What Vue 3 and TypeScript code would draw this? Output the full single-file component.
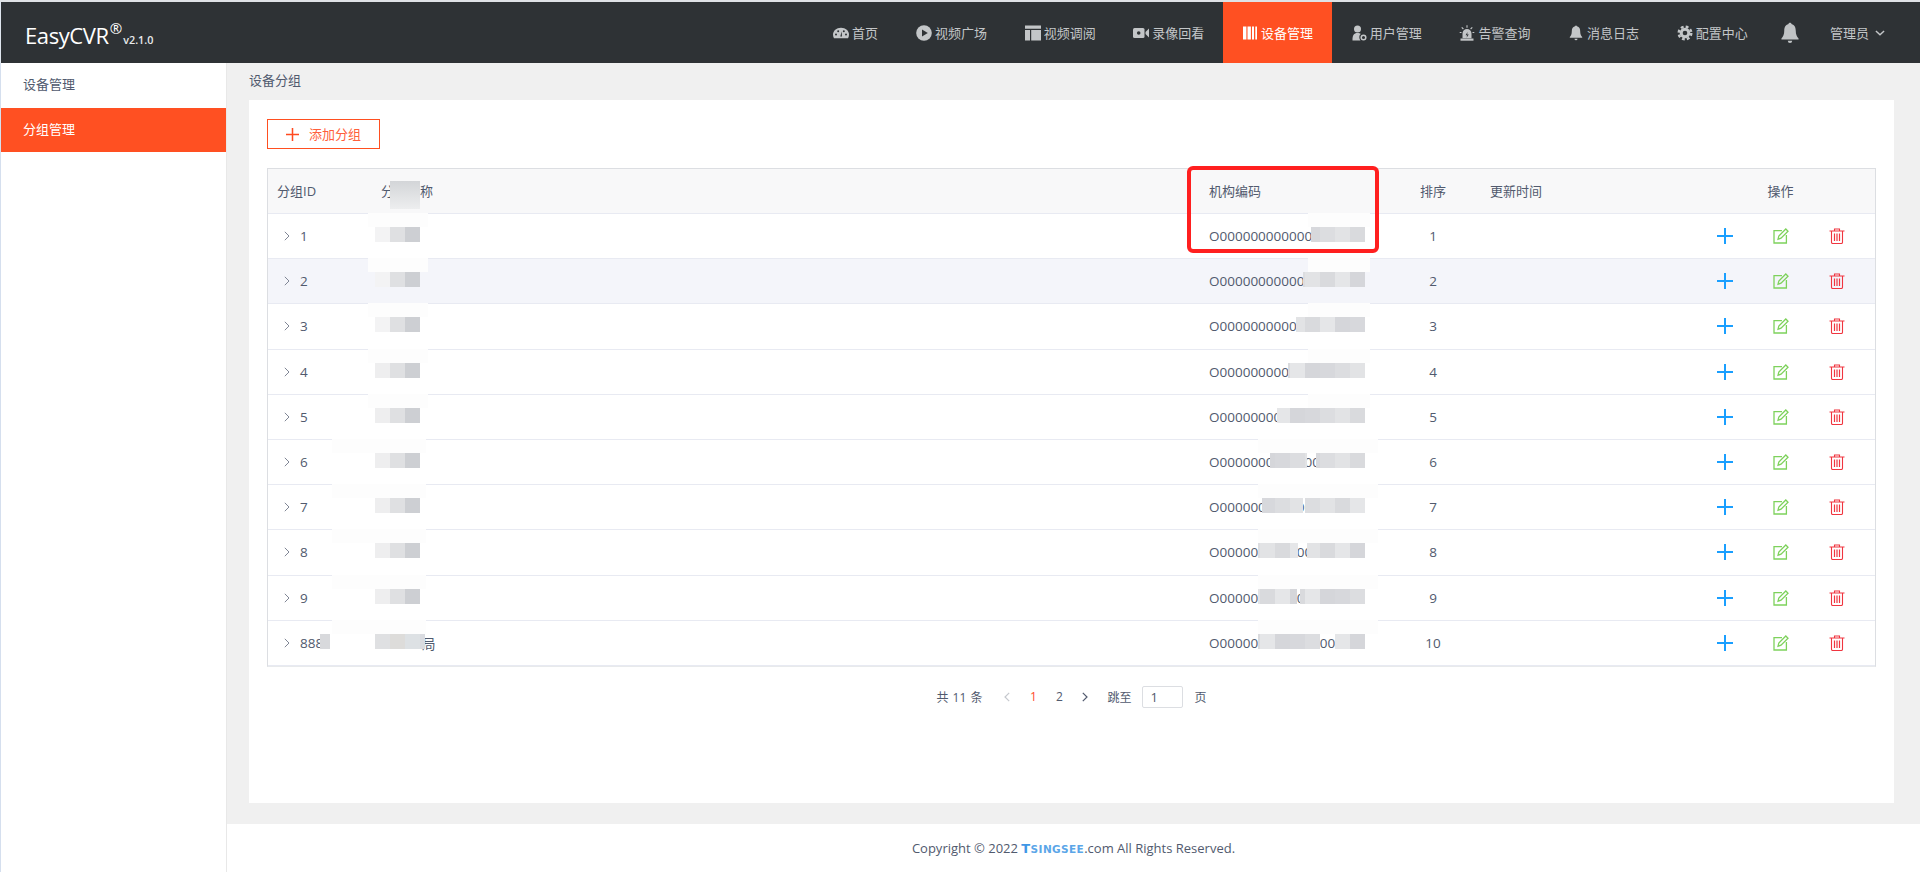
<script setup lang="ts">
interface NavItem { label: string; icon: string; active?: boolean; short?: boolean }
const dark = '#2e3235'
const navItems: NavItem[] = [
  { label: '首页', short: true, icon: `<path d="M1 13.2C.3 12 0 11 0 9.800 0 5.800 3.400 2.800 8 2.800s8 3 8 7c0 1.200-.3 2.200-1 3.400z" fill="currentColor"/><circle cx="3" cy="9.500" r="1" fill="${dark}"/><circle cx="5.200" cy="6.300" r="1" fill="${dark}"/><circle cx="13" cy="9.500" r="1" fill="${dark}"/><circle cx="10.800" cy="6.300" r="1" fill="${dark}"/><path d="M7.300 11.500 8.600 6.200 9 11.500z" fill="${dark}"/>` },
  { label: '视频广场', icon: `<circle cx="8" cy="8" r="7.800" fill="currentColor"/><path d="M6 4.400 11.800 8 6 11.600z" fill="${dark}"/>` },
  { label: '视频调阅', icon: `<path d="M0 .5h16v3.200H0zM0 5h5v10.500H0zM6.200 5H16v10.500H6.200z" fill="currentColor"/>` },
  { label: '录像回看', icon: `<rect x="0" y="3" width="11.500" height="10" rx="1.500" fill="currentColor"/><circle cx="5.700" cy="8" r="1.800" fill="${dark}"/><path d="M12.500 7 16 3.500v9L12.500 9z" fill="currentColor"/>` },
  { label: '设备管理', active: true, icon: `<path d="M1 1.500h3.400v13H1zM5.500 1.500h3.400v13H5.500zM10 1.500h2v13h-2zM13.300 1.500h1.700v13h-1.700z" fill="currentColor"/>` },
  { label: '用户管理', icon: `<circle cx="6.500" cy="4" r="3.500" fill="currentColor"/><path d="M1.500 15.500c0-5.500 1.300-7.500 5-7.500 1.500 0 2.500.3 3.300 1-1.500 1-2.200 4-.3 6.500z" fill="currentColor"/><circle cx="12.500" cy="12.500" r="2.300" fill="none" stroke="currentColor" stroke-width="1.500"/>` },
  { label: '告警查询', icon: `<path d="M3.500 13.200V8.500a4.500 4.500 0 0 1 9 0v4.700z" fill="currentColor"/><path d="M1.500 13.500h13v2.200h-13z" fill="currentColor"/><path d="M8.500 7 6.600 10.300h1.600L7.500 12.800l2.300-3.400H8.200z" fill="${dark}"/><path d="M8 .3v2.500M2.700 2.300l1.700 1.700M13.300 2.300 11.600 4M.7 7.500h1.800M13.500 7.500h1.800" stroke="currentColor" stroke-width="1.100"/>` },
  { label: '消息日志', icon: `<path d="M7 1.200c.3-.8 1.700-.8 2 0 2.400.6 3.200 2.700 3.200 5 0 3 .8 4.500 2 5.800v.8H1.800V12c1.200-1.300 2-2.800 2-5.800 0-2.300.8-4.400 3.200-5z" fill="currentColor"/><path d="M6.500 13.800h3a1.500 1.500 0 0 1-3 0z" fill="currentColor"/>` },
  { label: '配置中心', icon: `<circle cx="8" cy="8" r="5.300" fill="currentColor"/><circle cx="8" cy="8" r="6.300" fill="none" stroke="currentColor" stroke-width="2.400" stroke-dasharray="2.800 2.140"/><circle cx="8" cy="8" r="2.300" fill="${dark}"/>` },
]

const tones = ['#d7d8dc', '#dcdde0', '#e2e3e5', '#d9dadd', '#e5e6e8', '#d5d6da']
interface Tile { x: number; w: number; color: string }
function split(a: number, b: number, seed: number): Tile[] {
  const out: Tile[] = []
  let x = a
  let i = seed
  while (x < b) {
    const next = Math.min(b, (Math.floor((x - 1305) / 15) + 1) * 15 + 1305)
    out.push({ x, w: next - x, color: tones[i % tones.length] })
    x = next
    i += 1
  }
  return out
}
const codeSegments: number[][][] = [
  [[1311, 1365]], [[1303, 1365]], [[1296, 1365]], [[1288, 1365]], [[1277, 1365]],
  [[1270, 1307], [1316, 1365]], [[1262, 1303], [1305, 1365]], [[1258, 1298], [1307, 1365]],
  [[1258, 1297], [1300, 1365]], [[1258, 1320], [1335, 1365]],
]
const rows = codeSegments.map((segs, i) => {
  const last = i === 9
  const nameTiles: Tile[] = last
    ? [
        { x: 320, w: 10, color: '#d8d9dc' },
        { x: 375, w: 15, color: '#dfe0e2' },
        { x: 390, w: 15, color: '#dddcda' },
        { x: 405, w: 15, color: '#dde1e4' },
        { x: 420, w: 5, color: '#d9dbe0' },
      ]
    : [
        { x: 375, w: 15, color: i < 3 ? '#f3f3f4' : '#eeeeef' },
        { x: 390, w: 15, color: '#dfe0e2' },
        { x: 405, w: 15, color: '#cdcfd3' },
      ]
  return {
    id: last ? '888' : String(i + 1),
    sort: i + 1,
    last,
    hover: i === 1,
    tiles: [...nameTiles, ...segs.flatMap((s, k) => split(s[0], s[1], i + k))],
    covers: [
      { x: i >= 5 ? 332 : 368, w: i >= 5 ? 94 : 60 },
      { x: i >= 5 ? 1258 : 1308, w: i >= 5 ? 120 : 62 },
    ],
  }
})
const code = 'O' + '0'.repeat(18)
const offset = 268
</script>

<template>
  <div class="page">
    <div class="strip"></div>
    <header class="topbar">
      <div class="logo">
        <span class="brand">EasyCVR</span><span class="reg">®</span><span class="ver">v2.1.0</span>
      </div>
      <nav class="nav">
        <a
          v-for="item in navItems"
          :key="item.label"
          class="nav-item"
          :class="{ active: item.active, short: item.short }"
        >
          <svg class="nav-icon" viewBox="0 0 16 16" v-html="item.icon"></svg>
          <span>{{ item.label }}</span>
        </a>
        <svg class="bell" viewBox="0 0 16 18">
          <path d="M6.800 1.600C7 .4 9 .4 9.200 1.600c2.700.7 3.500 3 3.500 5.400 0 3.300.9 5 2.300 6.400v1H1v-1C2.400 12 3.300 10.300 3.300 7c0-2.400.8-4.700 3.500-5.400z" fill="currentColor" />
          <path d="M6.200 15.400h3.600a1.800 1.800 0 0 1-3.600 0z" fill="currentColor" />
        </svg>
        <div class="user">
          <span>管理员</span>
          <svg class="caret" viewBox="0 0 8 5"><path d="M.6.800 4 4 7.400.800" fill="none" stroke="currentColor" stroke-width="1.200" /></svg>
        </div>
      </nav>
    </header>
    <div class="body">
      <aside class="side">
        <div class="side-item">设备管理</div>
        <div class="side-item on">分组管理</div>
      </aside>
      <main class="main">
        <div class="crumb">设备分组</div>
        <section class="card">
          <button class="add" type="button">
            <svg class="add-icon" viewBox="0 0 12 12"><path d="M6 0v12M0 6h12" stroke="currentColor" stroke-width="1.400" /></svg>
            <span>添加分组</span>
          </button>
          <div class="table">
            <div class="tr head">
              <div class="c-id head-id">分组ID</div>
              <div class="c-name">分组名称</div>
              <div class="c-code">机构编码</div>
              <div class="c-sort">排序</div>
              <div class="c-time">更新时间</div>
              <div class="c-op">操作</div>
              <span class="head-mask"></span>
            </div>
            <div v-for="row in rows" :key="row.sort" class="tr" :class="{ hover: row.hover }">
              <div class="c-id">
                <svg class="expand" viewBox="0 0 6 10"><path d="M.8.800 5 5 .8 9.200" fill="none" stroke="currentColor" stroke-width="1" /></svg>
                <span>{{ row.id }}</span>
              </div>
              <div class="c-name"><span v-if="row.last" class="tail">局</span></div>
              <div class="c-code">{{ code }}</div>
              <div class="c-sort">{{ row.sort }}</div>
              <div class="c-time"></div>
              <div class="c-op actions">
                <svg class="act plus" viewBox="0 0 16 16"><path d="M8 0v16M0 8h16" stroke="currentColor" stroke-width="2" /></svg>
                <svg class="act edit" viewBox="0 0 16 16">
                  <path d="M9 2.600H1v12.400h12.400V7" fill="none" stroke="currentColor" stroke-width="1.300" />
                  <path d="M5 11.300 5.800 8 12.800 1 15 3.200 8 10.200z" fill="none" stroke="currentColor" stroke-width="1.300" />
                </svg>
                <svg class="act trash" viewBox="0 0 16 16">
                  <path d="M.5 3h15M5.500 3V1h5v2M2.500 3v11.200c0 .8.500 1.300 1.300 1.300h8.400c.8 0 1.300-.5 1.300-1.300V3" fill="none" stroke="currentColor" stroke-width="1.100" />
                  <path d="M5.500 5.500v7.500M8 5.500v7.500M10.500 5.500v7.500" stroke="currentColor" stroke-width="1.200" />
                </svg>
              </div>
              <span
                v-for="c in row.covers"
                :key="'c' + c.x"
                class="cover"
                :style="{ left: c.x - offset + 'px', width: c.w + 'px' }"
              ></span>
              <span
                v-for="t in row.tiles"
                :key="t.x"
                class="tile"
                :style="{ left: t.x - offset + 'px', width: t.w + 'px', background: t.color }"
              ></span>
            </div>
            <div class="mark"></div>
          </div>
          <div class="pager">
            <span class="total">共 11 条</span>
            <svg class="pg-arrow off" viewBox="0 0 6 10"><path d="M5.200.800 1 5l4.200 4.200" fill="none" stroke="currentColor" stroke-width="1.200" /></svg>
            <span class="pg-num cur">1</span>
            <span class="pg-num">2</span>
            <svg class="pg-arrow" viewBox="0 0 6 10"><path d="M.8.800 5 5 .8 9.200" fill="none" stroke="currentColor" stroke-width="1.200" /></svg>
            <span class="jump">跳至</span>
            <span class="pg-input">1</span>
            <span class="unit">页</span>
          </div>
        </section>
        <footer class="footer">
          Copyright © 2022&nbsp;<span class="tsing"><b>T</b>SINGSEE</span>.com All Rights Reserved.
        </footer>
      </main>
    </div>
  </div>
</template>

<style>
html, body { margin: 0; background: #f0f0f0; }
</style>

<style scoped>
.page {
  width: 1920px;
  height: 872px;
  overflow: hidden;
  display: flex;
  flex-direction: column;
  font-family: "Open Sans", "Noto Sans CJK SC", sans-serif;
  color: #515a6e;
  background: #f0f0f0;
}
.strip { height: 2px; background: #dfe2e5; flex: none; }
.topbar {
  height: 61px;
  flex: none;
  display: flex;
  background: #2e3235;
  border-left: 1px solid #dfe6ef;
  box-sizing: border-box;
}
.logo { display: flex; align-items: baseline; padding: 15px 0 0 24px; color: #fff; }
.brand { font-size: 22px; line-height: 36px; font-family: "Open Sans", sans-serif; letter-spacing: -0.4px; }
.reg { font-size: 15px; position: relative; top: -10px; margin-left: 1px; }
.ver { font-size: 10.800px; font-weight: 600; margin-left: 1px; color: #e8eaec; }
.nav { margin-left: auto; display: flex; align-items: stretch; color: #c3c6c8; }
.nav-item {
  display: flex;
  align-items: center;
  gap: 3px;
  width: 108.700px;
  padding-left: 19px;
  box-sizing: border-box;
  font-size: 13px;
  white-space: nowrap;
}
.nav-item.short { width: 83px; }
.nav-item.active { background: #ff5022; color: #fff; }
.nav-icon { width: 16px; height: 16px; flex: none; }
.bell { width: 20px; height: 22px; align-self: center; margin-left: 13.500px; color: #c0c3c5; }
.user { display: flex; align-items: center; gap: 6px; font-size: 13px; margin: 0 35px 0 30px; }
.caret { width: 10px; height: 6px; }
.body { flex: 1; display: flex; min-height: 0; }
.side {
  width: 227px;
  flex: none;
  background: #fff;
  border-left: 1px solid #d5dfee;
  border-right: 1px solid #e8e8e8;
  box-sizing: border-box;
  font-size: 13px;
}
.side-item { height: 45px; line-height: 43px; padding-left: 22px; color: #515a6e; }
.side-item.on { height: 44px; background: #ff5022; color: #fff; }
.main { flex: 1; display: flex; flex-direction: column; min-width: 0; }
.crumb { height: 37px; line-height: 34px; padding-left: 22px; font-size: 13px; flex: none; }
.card {
  flex: none;
  height: 703px;
  margin: 0 26px 0 22px;
  padding: 19px 18px 0;
  background: #fff;
  box-sizing: border-box;
}
.add {
  display: flex;
  align-items: center;
  width: 113px;
  height: 30px;
  padding: 0 0 2px 18px;
  gap: 10px;
  background: #fff;
  border: 1px solid #ff4f20;
  color: #ff5f3c;
  font: inherit;
  font-size: 13px;
  box-sizing: border-box;
}
.add-icon { width: 13px; height: 13px; color: #ff4a1f; position: relative; top: 1px; }
.table {
  position: relative;
  margin-top: 19px;
  border: 1px solid #dcdee2;
  border-bottom-color: #e8eaec;
  font-size: 13.500px;
}
.tr {
  position: relative;
  display: grid;
  grid-template-columns: 103px 830px 192px 80px 213px 1fr;
  align-items: center;
  height: 45.200px;
  border-bottom: 1px solid #e8eaf2;
  box-sizing: border-box;
  background: #fff;
}
.tr:last-of-type { border-bottom: 0; }
.tr.hover { background: #f4f5fa; }
.tr.head { height: 45px; padding-bottom: 2px; background: #f8f8f9; font-size: 13px; }
.c-id { display: flex; align-items: center; padding-left: 16px; gap: 10px; }
.head-id { padding-left: 9px; }
.c-name { padding-left: 10px; }
.c-code { padding-left: 8px; white-space: nowrap; overflow: hidden; }
.c-sort { text-align: center; }
.c-time { padding-left: 17px; }
.c-op { text-align: center; }
.actions { display: flex; justify-content: center; gap: 40px; }
.tail { padding-left: 41px; }
.expand { width: 6px; height: 10px; color: #808695; flex: none; }
.act { width: 16px; height: 16px; flex: none; }
.plus { color: #1a9fff; }
.edit { color: #7ed25c; }
.trash { color: #f0353f; }
.tile, .cover, .head-mask { position: absolute; display: block; }
.tile { top: 13px; height: 15px; }
.cover { top: -1px; height: 14px; background: #fdfdfd; }
.head-mask { left: 122px; top: 12px; width: 30px; height: 28px; background: linear-gradient(#d3d5d8, #edeeef); }
.mark {
  position: absolute;
  left: 919px;
  top: -3px;
  width: 192px;
  height: 87px;
  border: 4px solid #ff1f1f;
  border-radius: 6px;
  box-sizing: border-box;
}
.pager { display: flex; align-items: center; justify-content: center; margin-top: 19px; height: 22px; font-size: 12px; }
.total { margin-right: 22px; word-spacing: 1px; }
.pg-arrow { width: 6px; height: 10px; color: #515a6e; }
.pg-arrow.off { color: #c5c8ce; }
.pg-num { width: 26px; text-align: center; margin-left: 0; }
.pg-num.cur { color: #ff4a2a; margin-left: 10px; }
.pg-num + .pg-arrow { margin-left: 10px; }
.jump { margin-left: 19px; }
.pg-input {
  width: 41px;
  height: 22px;
  line-height: 20px;
  margin: 0 11px 0 11px;
  padding-left: 7px;
  border: 1px solid #dcdee2;
  border-radius: 2px;
  box-sizing: border-box;
  font-size: 13px;
}
.footer {
  flex: none;
  margin-top: 21px;
  height: 48px;
  display: flex;
  align-items: center;
  justify-content: center;
  background: #fff;
  font-size: 13px;
  white-space: pre;
}
.tsing {
  font-family: "DejaVu Sans", sans-serif;
  font-weight: 700;
  font-size: 10.500px;
  letter-spacing: 0.400px;
  color: #5ba6e8;
}
.tsing b { font-size: 13px; color: #3f97e6; }
</style>
